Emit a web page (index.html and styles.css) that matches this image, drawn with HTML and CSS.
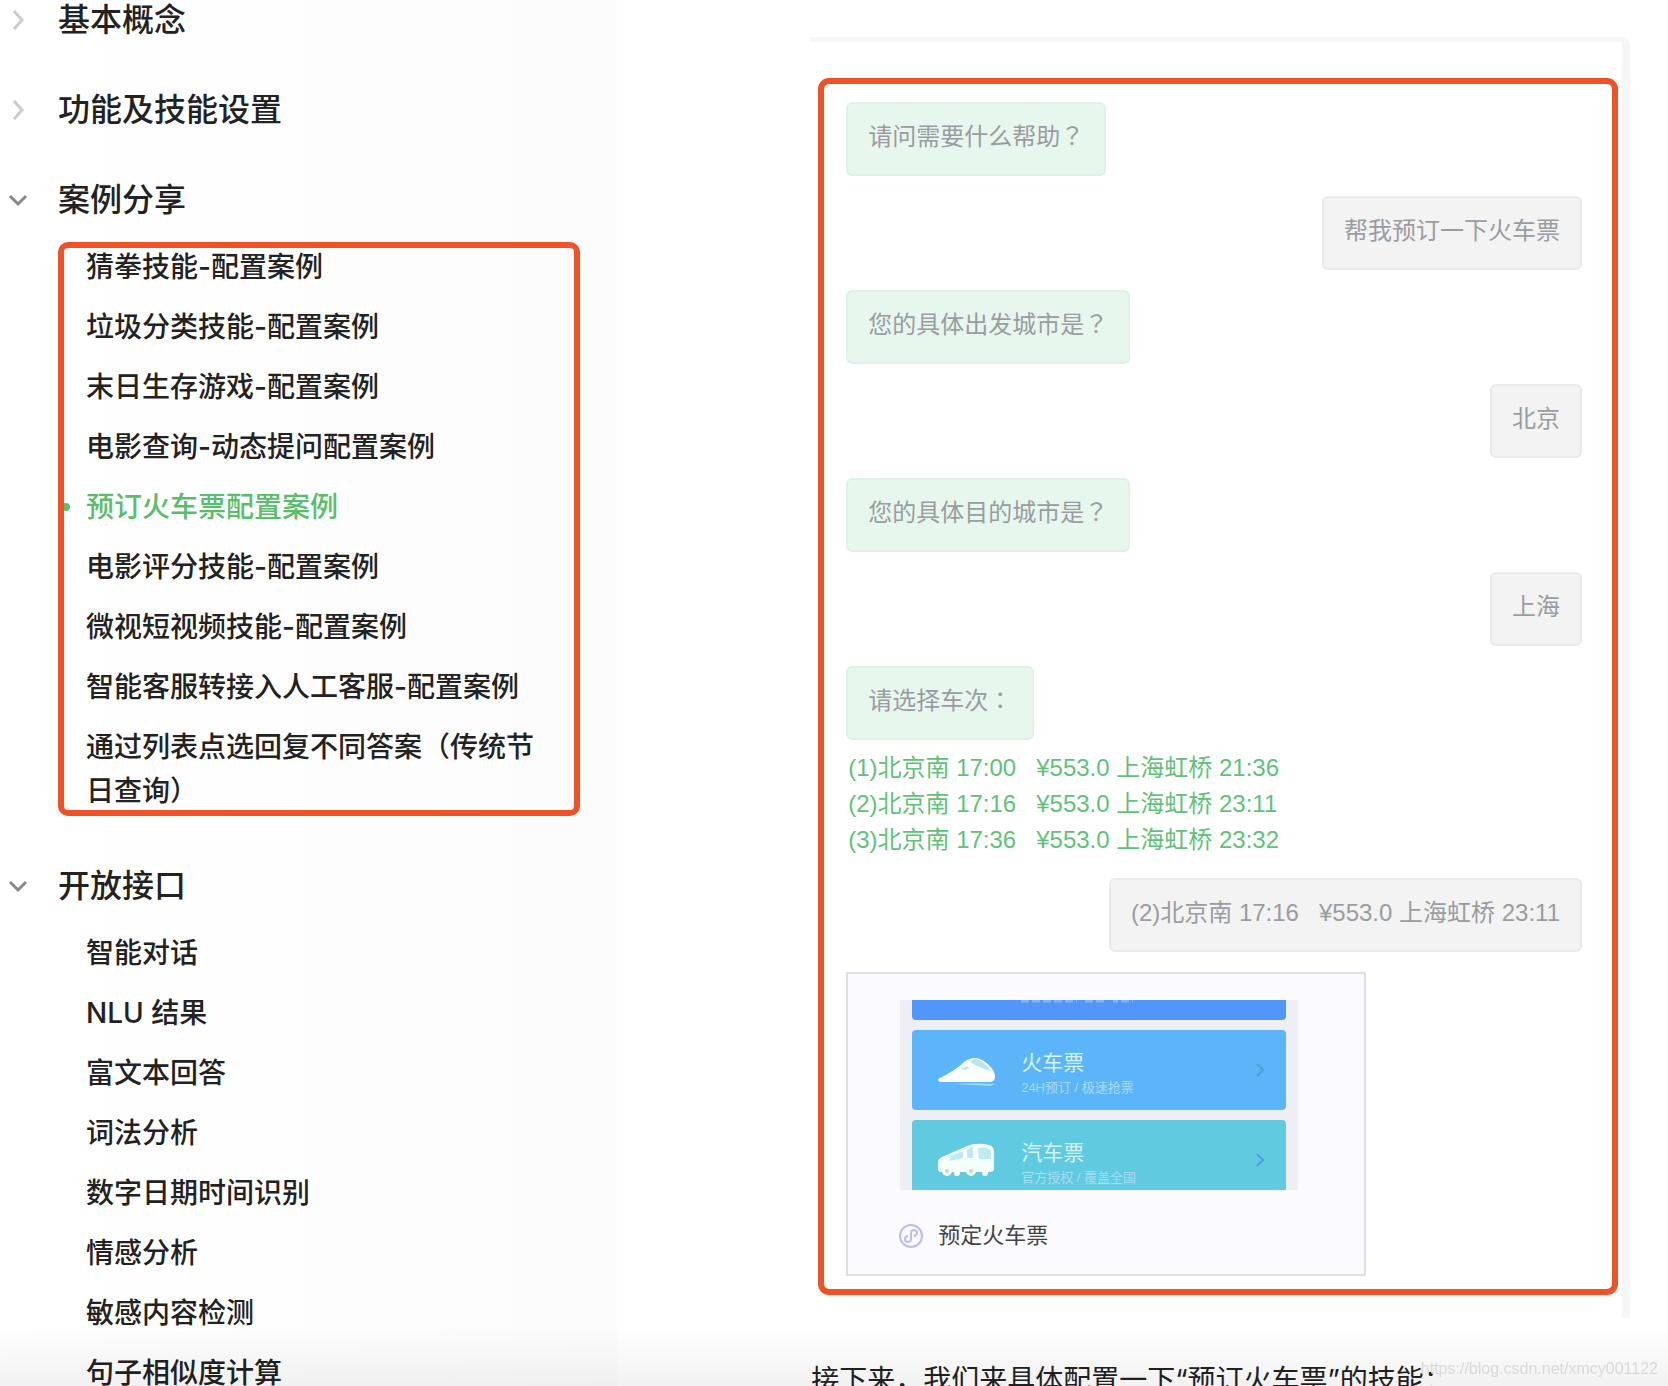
FILE: index.html
```html
<!DOCTYPE html>
<html lang="zh-CN">
<head>
<meta charset="utf-8">
<meta name="viewport" content="width=device-width, initial-scale=1">
<title>预订火车票配置案例</title>
<link rel="stylesheet" href="styles.css">
</head>
<body>
<div class="page">
  <nav class="sidebar" aria-label="文档目录">
    <section class="group">
      <button class="group-title" type="button" aria-expanded="false">
        <svg class="chevron" viewBox="0 0 24 24" aria-hidden="true"><path d="M8 3l8 9-8 9"/></svg>基本概念
      </button>
    </section>
    <section class="group">
      <button class="group-title" type="button" aria-expanded="false">
        <svg class="chevron" viewBox="0 0 24 24" aria-hidden="true"><path d="M8 3l8 9-8 9"/></svg>功能及技能设置
      </button>
    </section>
    <section class="group">
      <button class="group-title" type="button" aria-expanded="true">
        <svg class="chevron open" viewBox="0 0 24 24" aria-hidden="true"><path d="M4 8l8 8 8-8"/></svg>案例分享
      </button>
      <ul class="items marked">
        <li><a href="#">猜拳技能-配置案例</a></li>
        <li><a href="#">垃圾分类技能-配置案例</a></li>
        <li><a href="#">末日生存游戏-配置案例</a></li>
        <li><a href="#">电影查询-动态提问配置案例</a></li>
        <li class="current"><a href="#" aria-current="page">预订火车票配置案例</a></li>
        <li><a href="#">电影评分技能-配置案例</a></li>
        <li><a href="#">微视短视频技能-配置案例</a></li>
        <li><a href="#">智能客服转接入人工客服-配置案例</a></li>
        <li><a href="#">通过列表点选回复不同答案（传统节日查询）</a></li>
      </ul>
    </section>
    <section class="group">
      <button class="group-title" type="button" aria-expanded="true">
        <svg class="chevron open" viewBox="0 0 24 24" aria-hidden="true"><path d="M4 8l8 8 8-8"/></svg>开放接口
      </button>
      <ul class="items">
        <li><a href="#">智能对话</a></li>
        <li><a href="#">NLU 结果</a></li>
        <li><a href="#">富文本回答</a></li>
        <li><a href="#">词法分析</a></li>
        <li><a href="#">数字日期时间识别</a></li>
        <li><a href="#">情感分析</a></li>
        <li><a href="#">敏感内容检测</a></li>
        <li><a href="#">句子相似度计算</a></li>
      </ul>
    </section>
  </nav>

  <main class="content">
    <div class="shot">
      <div class="chat">
        <p class="bubble bot">请问需要什么帮助<span class="mark" lang="zh-TW">？</span></p>
        <p class="bubble user">帮我预订一下火车票</p>
        <p class="bubble bot">您的具体出发城市是<span class="mark" lang="zh-TW">？</span></p>
        <p class="bubble user">北京</p>
        <p class="bubble bot">您的具体目的城市是<span class="mark" lang="zh-TW">？</span></p>
        <p class="bubble user">上海</p>
        <p class="bubble bot">请选择车次<span class="mark" lang="zh-TW">：</span></p>
        <ul class="trains">
          <li><a href="#">(1)北京南 17:00&nbsp;&nbsp; ¥553.0 上海虹桥 21:36</a></li>
          <li><a href="#">(2)北京南 17:16&nbsp;&nbsp; ¥553.0 上海虹桥 23:11</a></li>
          <li><a href="#">(3)北京南 17:36&nbsp;&nbsp; ¥553.0 上海虹桥 23:32</a></li>
        </ul>
        <p class="bubble user">(2)北京南 17:16&nbsp;&nbsp; ¥553.0 上海虹桥 23:11</p>
        <a class="card" href="#">
          <span class="preview">
            <span class="tile plane">
              <svg class="traces" viewBox="0 0 112 4" aria-hidden="true"><path d="M0 1H56M64 1H84M92 1H97M100 1H112"/></svg>
            </span>
            <span class="tile train">
              <svg class="vehicle" viewBox="0 0 60 36" aria-hidden="true">
                <path d="M4 30C1 30 0 27 3 26C12 21 20 17 27 10C32 6 38 5 43 7C50 10 58 18 58 24C58 28 56 30 52 30Z" fill="#fafffb"/>
                <path d="M37 7C42 6 50 13 54 19C46 17 39 13 33 10Z" fill="#b5e6f5"/>
                <path d="M24 17l5-3 4 2-5 2z" fill="#c5edda"/>
                <path d="M16 32C30 31 45 31 58 32L54 34Z" fill="#9bdbe8"/>
              </svg>
              <span class="tile-text"><b>火车票</b><small>24H预订 / 极速抢票</small></span>
              <svg class="go" viewBox="0 0 12 16" aria-hidden="true"><path d="M3 2l6 6-6 6"/></svg>
            </span>
            <span class="tile bus">
              <svg class="vehicle" viewBox="0 0 60 36" aria-hidden="true">
                <path d="M1 20Q1 17 5 15L30 4Q40 0 52 3Q57 4 57 10V27Q57 30 53 30H4Q1 30 1 27Z" fill="#f4fffb"/>
                <path d="M14 14L26 9V16L12 19Z M30 7L36 5V16H30Z M41 6Q53 4 54 10V17H42Z" fill="#bdebf0"/>
                <circle cx="10" cy="29" r="5" fill="#f7fff2"/><circle cx="34" cy="29" r="5" fill="#f7fff2"/>
                <circle cx="10" cy="29" r="2" fill="#b4ddd0"/><circle cx="34" cy="29" r="2" fill="#b4ddd0"/>
                <circle cx="20" cy="31" r="3" fill="#f7fff2"/><circle cx="48" cy="31" r="3" fill="#f7fff2"/>
              </svg>
              <span class="tile-text"><b>汽车票</b><small>官方授权 / 覆盖全国</small></span>
              <svg class="go" viewBox="0 0 12 16" aria-hidden="true"><path d="M3 2l6 6-6 6"/></svg>
            </span>
          </span>
          <span class="caption">
            <svg class="mini" viewBox="0 0 26 26" aria-hidden="true"><circle cx="13" cy="13" r="11"/><path d="M10 13C6 13 6 19 10 19C12 19 13 18 13 16V10C13 8 14 7 16 7C20 7 20 12 16 13"/></svg>
            预定火车票
          </span>
        </a>
      </div>
    </div>
    <p class="next">接下来，我们来具体配置一下“预订火车票”的技能：</p>
  </main>
</div>
<div class="watermark">https://blog.csdn.net/xmcy001122</div>
</body>
</html>
```
FILE: styles.css
```css
* {
  box-sizing: border-box;
}

body {
  margin: 0;
  height: 100vh;
  overflow: hidden;
  background: #fff;
  color: #222;
  font-family: Inter, "Noto Sans CJK SC", sans-serif;
}

ul,
p {
  margin: 0;
  padding: 0;
  list-style: none;
}

a {
  color: inherit;
  text-decoration: none;
}

.page {
  display: flex;
  align-items: stretch;
}

/* Soft shade along the bottom edge of the window */
.page::after {
  content: "";
  position: fixed;
  inset: auto 0 0;
  height: 60px;
  background: linear-gradient(rgba(0, 0, 0, 0), rgba(0, 0, 0, 0.05));
  pointer-events: none;
}

/* Sidebar */
.sidebar {
  display: flex;
  flex: 0 0 37%;
  flex-direction: column;
  gap: 50px;
  padding-right: 37px;
  background: linear-gradient(to right, #fff, #fcfcfc);
}

.group-title {
  display: flex;
  align-items: center;
  gap: 28px;
  width: 100%;
  height: 40px;
  padding: 0 0 0 6px;
  border: 0;
  background: none;
  color: inherit;
  font: 500 32px/40px Inter, "Noto Sans CJK SC", sans-serif;
  text-align: left;
}

.chevron {
  width: 24px;
  height: 24px;
  fill: none;
  stroke: #ccc;
  stroke-width: 3;
}

.chevron.open {
  stroke: #888;
}

.items {
  display: flex;
  flex-direction: column;
  gap: 16px;
  position: relative;
  margin: 25px 0 0 58px;
  padding: 0 28px;
  font-size: 28px;
  font-weight: 500;
  line-height: 44px;
}

.items.marked {
  margin-bottom: 3px;
}

.marked::after {
  content: "";
  position: absolute;
  inset: -3px 0;
  border: 6px solid #f05228;
  border-radius: 10px;
  pointer-events: none;
}

.current {
  position: relative;
  color: #58be6a;
}

.current::before {
  content: "";
  position: absolute;
  left: -24px;
  top: 18px;
  width: 8px;
  height: 8px;
  border-radius: 50%;
  background: currentColor;
}

/* Article */
.content {
  flex: 1;
  min-width: 0;
  padding: 37px 38px 0 194px;
}

.shot {
  padding: 36px 4px 23px 7px;
  border-top: 5px solid #f5f6f8;
  border-right: 8px solid #f5f6f8;
  border-top-right-radius: 8px;
}

.chat {
  display: flex;
  flex-direction: column;
  align-items: flex-start;
  gap: 20px;
  padding: 18px 30px 13px 22px;
  border: 6px solid #f05228;
  border-radius: 11px;
  color: #999ca0;
  font-family: "Liberation Sans", "Noto Sans CJK SC", sans-serif;
  font-size: 24px;
  line-height: 36px;
}

.bubble {
  padding: 15px 20px 19px;
  border: 2px solid #dcf3e5;
  border-radius: 6px;
  background: #e8f7ee;
}

.bubble.user {
  align-self: flex-end;
  border-color: #eaeaea;
  background: #f3f3f3;
}

.mark {
  font-family: "Noto Sans CJK TC", sans-serif;
  line-height: 24px;
}

.trains {
  margin-top: -10px;
  padding-left: 2px;
  color: #5fc277;
}

.card {
  display: flex;
  flex-direction: column;
  gap: 30px;
  width: 520px;
  max-width: 100%;
  padding: 26px 50px 22px;
  border: 2px solid #dfe0e4;
  background: #fafaff;
}

.preview {
  display: flex;
  flex-direction: column;
  gap: 10px;
  height: 190px;
  margin: 0 16px 0 2px;
  padding: 0 12px;
  overflow: hidden;
  background: #eeeef4;
}

.tile {
  display: flex;
  flex: 0 0 80px;
  align-items: center;
  padding: 0 20px 0 25px;
  border-radius: 4px;
  background: #5cb5f9;
  color: #d5f3fa;
}

.tile.plane {
  flex-basis: 20px;
  align-items: flex-start;
  padding-left: 109px;
  border-radius: 0 0 4px 4px;
  background: #5296f9;
}

.tile.bus {
  background: #5fcae0;
}

.traces {
  width: 112px;
  height: 4px;
  fill: none;
  stroke: #7fb4f8;
  stroke-width: 3;
  stroke-dasharray: 8 3;
}

.vehicle {
  width: 60px;
  height: 36px;
}

.tile-text {
  display: flex;
  flex: 1;
  flex-direction: column;
  padding: 8px 0 0 24px;
}

.tile-text b {
  font-size: 21px;
  font-weight: 400;
  line-height: 28px;
}

.tile-text small {
  color: #a5dcf6;
  font-size: 13px;
  line-height: 22px;
}

.go {
  width: 12px;
  height: 16px;
  fill: none;
  stroke: #4a9fd6;
  stroke-width: 2;
}

.caption {
  display: flex;
  align-items: center;
  gap: 14px;
  color: #444;
  font-size: 22px;
  line-height: 32px;
}

.mini {
  width: 26px;
  height: 26px;
  fill: none;
  stroke: #b9bdf5;
  stroke-width: 2;
}

.next {
  margin-top: 40px;
  font-size: 28px;
  line-height: 44px;
}

.watermark {
  position: fixed;
  right: 10px;
  bottom: 7px;
  color: #d9d9d9;
  font: 16px/20px "Liberation Sans", sans-serif;
}
```
